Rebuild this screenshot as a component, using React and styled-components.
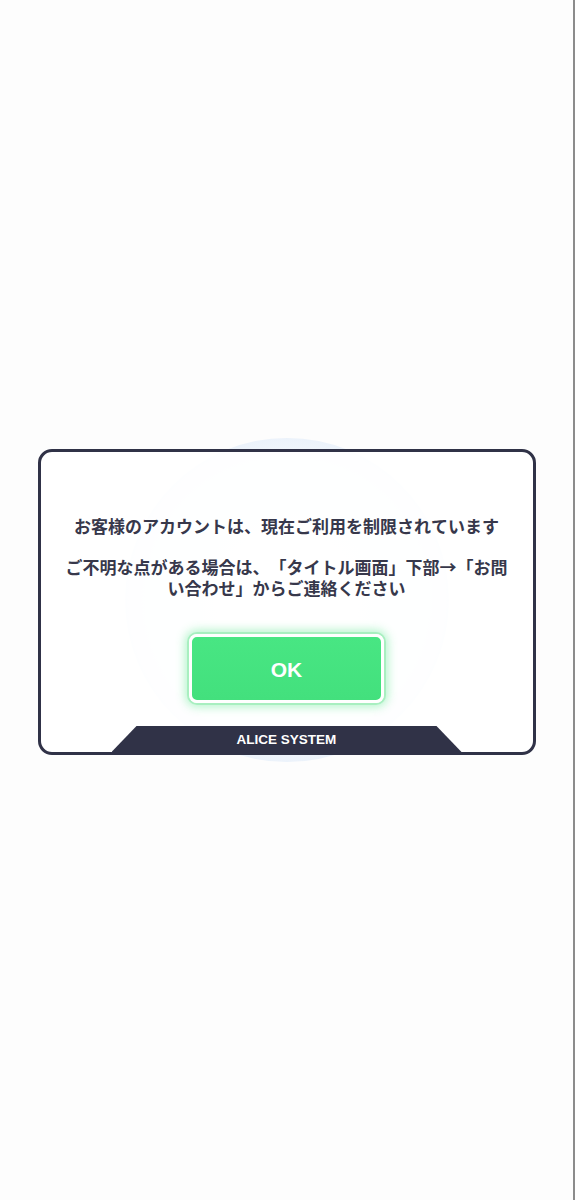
import React from "react";
import styled, { createGlobalStyle } from "styled-components";

const Global = createGlobalStyle`
  html, body { margin: 0; padding: 0; background: #fdfdfd; }
  body { font-family: "Noto Sans CJK JP", "Noto Sans", sans-serif; }
`;

const Page = styled.div`
  box-sizing: border-box;
  width: 575px;
  min-height: 1200px;
  background: #fdfdfd;
  border-right: 2px solid #8c8c8c;
  display: flex;
  flex-direction: column;
  align-items: center;
  padding-top: 449px;
`;

const Stage = styled.div`
  position: relative;
  width: 498px;
`;

const Halo = styled.div`
  position: absolute;
  left: 50%;
  top: 50%;
  width: 324px;
  height: 324px;
  margin-left: -162px;
  margin-top: -164px;
  border-radius: 50%;
  background: radial-gradient(circle, #fbfcfe 0%, #f3f7fc 62%, #dde9f8 88%, #cfe1f5 100%);
  z-index: 0;
`;

const Panel = styled.div`
  position: relative;
  z-index: 1;
  box-sizing: border-box;
  width: 498px;
  height: 306px;
  border: 3px solid #303247;
  border-radius: 14px;
  background: rgba(255, 255, 255, 0.9);
  display: flex;
  flex-direction: column;
  align-items: center;
  padding-top: 63px;
  overflow: hidden;
`;

const Message = styled.div`
  width: 450px;
  display: flex;
  flex-direction: column;
  gap: 20px;
  text-align: center;
`;

const Line = styled.p`
  margin: 0;
  font-family: "Noto Sans CJK JP", sans-serif;
  font-weight: 700;
  font-size: 17px;
  line-height: 21px;
  color: #37384b;
  text-spacing-trim: space-all;
  font-kerning: none;
`;

const OkButton = styled.button`
  margin-top: 36px;
  box-sizing: border-box;
  width: 195px;
  height: 69px;
  border: 3px solid #ffffff;
  border-radius: 8px;
  background: linear-gradient(180deg, #48e683 0%, #43e07d 100%);
  box-shadow: 0 0 0 2px #a8efc0, 0 0 10px 4px rgba(90, 230, 140, 0.45);
  color: #ffffff;
  font-family: "Liberation Sans", Arial, sans-serif;
  font-weight: 700;
  font-size: 21px;
  cursor: pointer;
  padding: 2px 0 0;
`;

const Footer = styled.div`
  margin-top: auto;
  width: 350px;
  height: 26px;
  background: #303247;
  clip-path: polygon(25px 0, 325px 0, 100% 100%, 0 100%);
  display: flex;
  align-items: center;
  justify-content: center;
  color: #ffffff;
  font-family: "Liberation Sans", Arial, sans-serif;
  font-weight: 700;
  font-size: 13.5px;
  padding-top: 1px;
  box-sizing: border-box;
`;

export default function App() {
  return (
    <>
      <Global />
      <Page>
        <Stage>
          <Halo />
          <Panel>
            <Message>
              <Line>お客様のアカウントは、現在ご利用を制限されています</Line>
              <Line>ご不明な点がある場合は、「タイトル画面」下部→「お問い合わせ」からご連絡ください</Line>
            </Message>
            <OkButton>OK</OkButton>
            <Footer>ALICE SYSTEM</Footer>
          </Panel>
        </Stage>
      </Page>
    </>
  );
}
